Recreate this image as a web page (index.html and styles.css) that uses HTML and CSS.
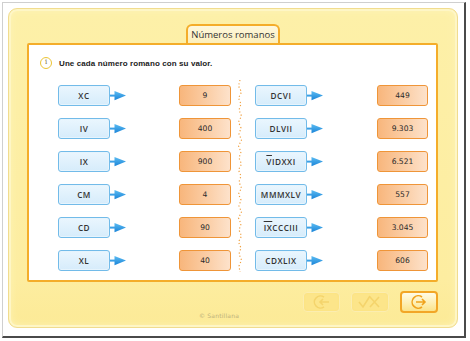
FILE: index.html
```html
<!DOCTYPE html>
<html lang="es">
<head>
<meta charset="utf-8">
<title>Números romanos</title>
<link rel="stylesheet" href="styles.css">
</head>
<body>
<div class="frame">
  <div class="panel">
    <div class="tab">Números romanos</div>
    <div class="content">
      <div class="instr">
        <span class="info">i</span>
        <span class="instr-text">Une cada número romano con su valor.</span>
      </div>
      <div class="grid">
        <div class="divider">
          <svg width="6" height="192" viewBox="0 0 6 192"><path d="M3 0 L1.5 6 L4.5 12 L1.5 18 L4 24 L2 30 L4.5 36 L1.5 42 L4 48 L2 54 L4.5 60 L1.5 66 L4 72 L2 78 L4.5 84 L1.5 90 L4 96 L2 102 L4.5 108 L1.5 114 L4 120 L2 126 L4.5 132 L1.5 138 L4 144 L2 150 L4.5 156 L1.5 162 L4 168 L2 174 L4.5 180 L2 186 L3 192" fill="none" stroke="#f0a040" stroke-width="1.2" stroke-dasharray="1.2 2.2"/></svg>
        </div>

        <div class="rom c1">XC</div><div class="arr c2"><svg width="16" height="21" viewBox="0 0 16 21"><use href="#arrow"/></svg></div><div class="num c4">9</div>
        <div class="rom c6">DCVI</div><div class="arr c7"><svg width="16" height="21" viewBox="0 0 16 21"><use href="#arrow"/></svg></div><div class="num c9">449</div>

        <div class="rom c1">IV</div><div class="arr c2"><svg width="16" height="21" viewBox="0 0 16 21"><use href="#arrow"/></svg></div><div class="num c4">400</div>
        <div class="rom c6">DLVII</div><div class="arr c7"><svg width="16" height="21" viewBox="0 0 16 21"><use href="#arrow"/></svg></div><div class="num c9">9.303</div>

        <div class="rom c1">IX</div><div class="arr c2"><svg width="16" height="21" viewBox="0 0 16 21"><use href="#arrow"/></svg></div><div class="num c4">900</div>
        <div class="rom c6"><span class="ov">V</span>IDXXI</div><div class="arr c7"><svg width="16" height="21" viewBox="0 0 16 21"><use href="#arrow"/></svg></div><div class="num c9">6.521</div>

        <div class="rom c1">CM</div><div class="arr c2"><svg width="16" height="21" viewBox="0 0 16 21"><use href="#arrow"/></svg></div><div class="num c4">4</div>
        <div class="rom c6">MMMXLV</div><div class="arr c7"><svg width="16" height="21" viewBox="0 0 16 21"><use href="#arrow"/></svg></div><div class="num c9">557</div>

        <div class="rom c1">CD</div><div class="arr c2"><svg width="16" height="21" viewBox="0 0 16 21"><use href="#arrow"/></svg></div><div class="num c4">90</div>
        <div class="rom c6"><span class="ov">IX</span>CCCIII</div><div class="arr c7"><svg width="16" height="21" viewBox="0 0 16 21"><use href="#arrow"/></svg></div><div class="num c9">3.045</div>

        <div class="rom c1">XL</div><div class="arr c2"><svg width="16" height="21" viewBox="0 0 16 21"><use href="#arrow"/></svg></div><div class="num c4">40</div>
        <div class="rom c6">CDXLIX</div><div class="arr c7"><svg width="16" height="21" viewBox="0 0 16 21"><use href="#arrow"/></svg></div><div class="num c9">606</div>
      </div>
    </div>
    <div class="footer">
      <span></span>
      <span class="copy">© Santillana</span>
      <div class="btns">
        <div class="btn off w37">
          <svg width="22" height="16" viewBox="0 0 22 16"><path d="M13 3.2 A6 6 0 1 0 13 12.8" fill="none" stroke="#f4d46c" stroke-width="1.6"/><path d="M18 8 H9 M12 5 L9 8 L12 11" fill="none" stroke="#f4d46c" stroke-width="1.6"/></svg>
        </div>
        <div class="btn off">
          <svg width="26" height="16" viewBox="0 0 26 16"><path d="M2 8 L6 13 L13 2" fill="none" stroke="#f4d46c" stroke-width="1.6"/><path d="M13 3 L22 13 M22 3 L13 13" fill="none" stroke="#f4d46c" stroke-width="1.6"/></svg>
        </div>
        <div class="btn on">
          <svg width="22" height="18" viewBox="0 0 22 18"><path d="M14 4 A6.2 6.2 0 1 0 14 14" fill="none" stroke="#f0a21c" stroke-width="1.6"/><path d="M8 9 H17 M14 6 L17 9 L14 12" fill="none" stroke="#f0a21c" stroke-width="1.6"/></svg>
        </div>
      </div>
    </div>
  </div>
</div>
<svg width="0" height="0" class="defs">
  <defs>
    <linearGradient id="ag" x1="0" y1="0" x2="0" y2="1">
      <stop offset="0" stop-color="#5cbcf2"/>
      <stop offset="1" stop-color="#1a84d8"/>
    </linearGradient>
    <g id="arrow">
      <rect x="0" y="9.6" width="6" height="2" fill="#3aa0e6"/>
      <path d="M4.5 6 L16 10.6 L4.5 15.2 Z" fill="url(#ag)"/>
    </g>
  </defs>
</svg>
</body>
</html>
```
FILE: styles.css
```css
* { box-sizing: border-box; }
html, body { margin: 0; padding: 0; background: #ffffff; }
body { font-family: "DejaVu Sans", Verdana, sans-serif; color: #333; }

.defs { position: absolute; }

.frame {
  margin: 2px 0 0 2px;
  width: 464px;
  height: 336px;
  padding: 5px 6px 8px 5px;
  border-top: 1px solid #cfcfcf;
  border-left: 1px solid #cfcfcf;
  border-right: 2px solid #4a4a4a;
  border-bottom: 2px solid #4a4a4a;
  background: #fff;
}

.panel {
  width: 450px;
  height: 320px;
  border: 1px solid #f1dc8e;
  border-radius: 9px;
  background: linear-gradient(#fdf0a8, #fdeda0 85%, #fcea96);
  box-shadow: inset 0 0 0 2px #fef6c6, inset 0 0 10px #fef5c0;
  padding-top: 15px;
  display: flex;
  flex-direction: column;
}

.tab {
  align-self: center;
  width: 94px;
  height: 19px;
  border: 2px solid #f4ad2a;
  border-bottom: none;
  border-radius: 6px 6px 0 0;
  background: linear-gradient(#fef8dc, #fcefbc);
  font-family: "Open Sans", "DejaVu Sans", sans-serif;
  font-size: 9.5px;
  line-height: 17px;
  text-align: center;
  white-space: nowrap;
  color: #333;
}

.content {
  margin: 0 19px 0 18px;
  height: 239px;
  border: 2px solid #f4ad2a;
  border-radius: 2px;
  background: #fff;
  padding: 12px 0 0 11px;
}

.instr {
  display: flex;
  align-items: center;
  gap: 7px;
  height: 12px;
}

.info {
  width: 12px;
  height: 12px;
  border: 1.5px solid #ecc535;
  border-radius: 50%;
  font-family: "DejaVu Serif", serif;
  font-size: 7px;
  line-height: 9px;
  text-align: center;
  color: #7a6a2a;
}

.instr-text {
  font-family: "Liberation Sans", Arial, sans-serif;
  font-weight: bold;
  font-size: 8px;
  color: #222;
  letter-spacing: 0.1px;
}

.grid {
  margin: 16px 0 0 18px;
  display: grid;
  grid-template-columns: 52px 16px 53px 52px 24px 52px 16px 54px 51px;
  grid-template-rows: repeat(6, 21px);
  row-gap: 12px;
}

.c1 { grid-column: 1; }
.c2 { grid-column: 2; }
.c4 { grid-column: 4; }
.c6 { grid-column: 6; }
.c7 { grid-column: 7; }
.c9 { grid-column: 9; }

.divider {
  grid-column: 5;
  grid-row: 1 / -1;
  margin-top: -5px;
  justify-self: center;
  width: 6px;
  transform: translateX(-3px);
}
.divider svg { display: block; }

.rom, .num {
  display: flex;
  align-items: center;
  justify-content: center;
  border-radius: 3px;
  font-size: 7.6px;
  color: #2a2a2a;
}

.rom {
  border: 1px solid #72bbe9;
  background: linear-gradient(#eaf6fe, #d6ecfb);
  box-shadow: inset 0 0 0 1px #e6f4fd;
  font-family: "Open Sans", "DejaVu Sans", sans-serif;
  font-weight: 600;
  font-size: 8.2px;
  letter-spacing: 0.5px;
  color: #333;
}

.num {
  border: 1px solid #ef9538;
  background: linear-gradient(to right, #f8b67c, #fbd0aa 60%, #fde2cb);
}

.ov { text-decoration: overline; }

.arr svg { display: block; }

.footer {
  flex: 1;
  display: grid;
  grid-template-columns: 1fr auto 1fr;
  padding: 9px 19px 0 0;
}

.copy {
  align-self: start;
  margin-top: 21px;
  margin-right: 9px;
  font-size: 6px;
  color: #bdb07a;
  letter-spacing: 0.2px;
}

.btns {
  justify-self: end;
  display: flex;
  align-items: flex-start;
  gap: 11px;
  height: 24px;
}

.btn {
  height: 20px;
  width: 38px;
  border-radius: 4px;
  display: flex;
  align-items: center;
  justify-content: center;
}
.btn.w37 { width: 37px; }
.btn.off {
  margin-top: 1px;
  background: #fce58a;
  border: 1px solid #fbedb0;
  box-shadow: inset 0 0 2px #f9df7a;
}
.btn.on {
  height: 22px;
  border: 2px solid #f2a626;
  background: linear-gradient(#fffbe6, #fdeeb0 60%, #fbe38a);
}
.btn svg { display: block; }
```
